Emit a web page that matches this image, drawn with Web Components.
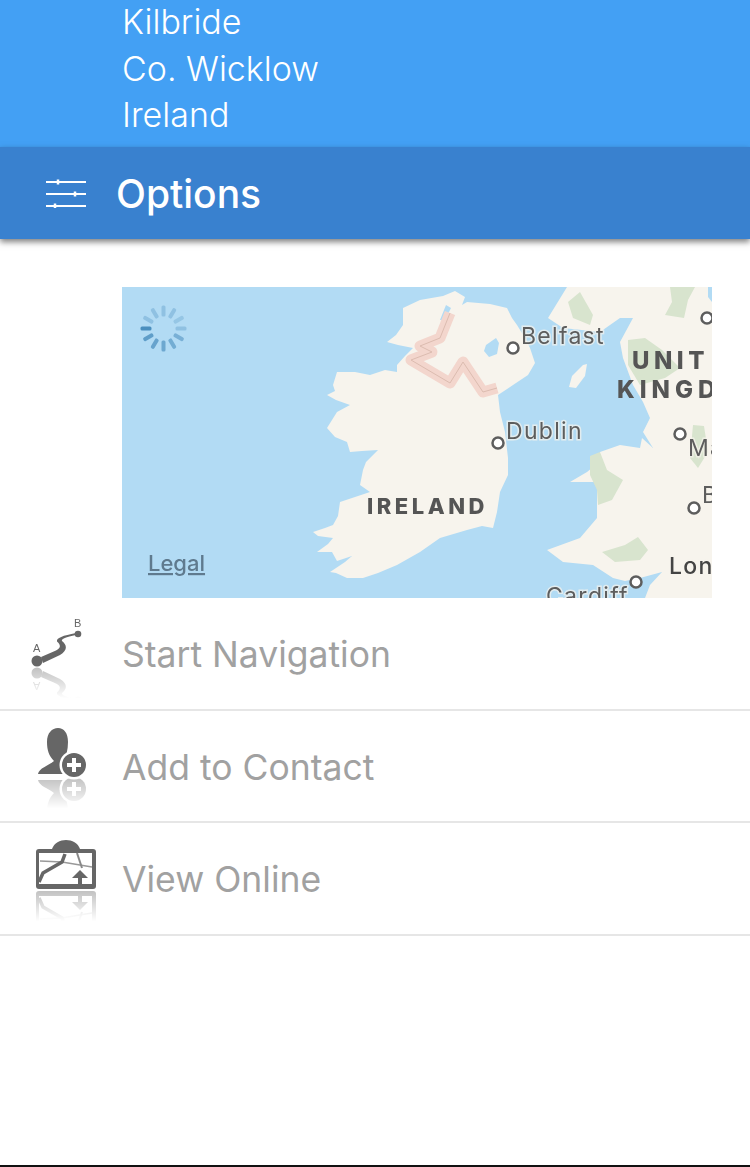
<!DOCTYPE html>
<html>
<head>
<meta charset="utf-8">
<style>
  html, body { margin: 0; padding: 0; background: #fff; }
  body { font-family: Inter, "Liberation Sans", sans-serif; height: 1167px; overflow: hidden; }
  #page { display: flex; flex-direction: column; height: 1167px; box-sizing: border-box; border-bottom: 2px solid #111; }
</style>
</head>
<body>
<div id="page">
  <address-header>
    <span>Kilbride</span>
    <span>Co. Wicklow</span>
    <span>Ireland</span>
  </address-header>
  <options-bar>Options</options-bar>
  <map-view></map-view>
  <action-list>
    <action-row icon="route">Start Navigation</action-row>
    <action-row icon="contact">Add to Contact</action-row>
    <action-row icon="online">View Online</action-row>
  </action-list>
</div>

<script>
class AddressHeader extends HTMLElement {
  constructor() {
    super();
    this.attachShadow({ mode: 'open' });
    this.shadowRoot.innerHTML = `
      <style>
        :host {
          display: flex;
          height: 147px;
          box-sizing: border-box;
          padding-left: 122px;
          background: #43a0f4;
          color: #fff;
        }
        .lines {
          display: flex;
          flex-direction: column;
          margin-top: -1px;
          font-size: 34px;
          font-weight: 300;
          line-height: 46.500px;
        }
        ::slotted(span) { display: block; }
      </style>
      <div class="lines"><slot></slot></div>
    `;
  }
}

class OptionsBar extends HTMLElement {
  constructor() {
    super();
    this.attachShadow({ mode: 'open' });
    this.shadowRoot.innerHTML = `
      <style>
        :host {
          display: flex;
          align-items: center;
          gap: 29px;
          height: 92px;
          box-sizing: border-box;
          padding-left: 45px;
          background: #3981cf;
          color: #fff;
          font-size: 39px;
          font-weight: 500;
          box-shadow: 0 3px 6px rgba(0,0,0,.5);
          position: relative;
        }
        svg { display: block; }
      </style>
      <svg width="42" height="30" viewBox="0 0 42 30" fill="none" stroke="#fff">
        <path d="M1 4h40M1 16h40M1 28h40" stroke-width="2"/>
        <path d="M13 1.500v5M30 13.500v5M10 25.500v5" stroke-width="2.500"/>
      </svg>
      <slot></slot>
    `;
  }
}

class MapView extends HTMLElement {
  constructor() {
    super();
    this.attachShadow({ mode: 'open' });
    let ticks = '';
    // spinner, darkest tick at 9 o'clock
    for (let i = 0; i < 12; i++) {
      const op = [0.9, 0.72, 0.65, 0.6, 0.55, 0.5, 0.3, 0.25, 0.3, 0.3, 0.3, 0.3][i];
      ticks += `<rect x="-23" y="-2" width="11" height="4" rx="1.500" fill="#3f86b8" opacity="${op}" transform="rotate(${-30 * i})"/>`;
    }
    this.shadowRoot.innerHTML = `
      <style>
        :host {
          display: block;
          width: 590px;
          height: 311px;
          margin: 48px 0 0 122px;
          overflow: hidden;
        }
        svg { display: block; filter: blur(.4px); }
        text { font-family: Inter, "Liberation Sans", sans-serif; }
        .city { font-size: 23px; fill: #5d5d5d; letter-spacing: 1.300px; stroke: #f7f4ed; stroke-width: 3px; paint-order: stroke; stroke-opacity: .7; }
        .country { font-size: 24px; font-weight: 800; fill: #555; letter-spacing: 4.500px; }
        .dot { fill: #fff; stroke: #5d5d5d; stroke-width: 2.500; }
      </style>
      <svg width="590" height="311" viewBox="122 287 590 311">
        <rect x="122" y="287" width="590" height="311" fill="#b2dbf4"/>
        <path fill="#f7f4ed" d="M443 296L455 291L465 297L462 305L467 302L490 304L507 308L512 318L517 325L525 338L530 348L535 363L528 375L513 385L498 395L500 412L505 432L508 458L508 475L500 492L497 512L493 528L482 526L467 530L440 538L420 552L397 565L378 573L363 578L347 578L336 573L330 572L345 562L352 556L337 561L332 552L317 552L328 544L333 538L318 536L313 532L325 528L333 525L338 516L340 502L355 497L370 492L360 485L363 470L366 462L378 450L362 451L350 452L347 442L335 437L327 428L337 412L350 405L336 400L327 395L335 391L333 385L337 372L355 372L370 375L385 370L397 372L397 365L405 356L413 348L398 345L387 342L396 335L403 325L403 308L420 300Z"/>
        <path fill="#b2dbf4" d="M486 345L496 338L499 343L497 354L489 357L484 351Z"/>
        <path fill="#b2dbf4" d="M440 320L446 305L451 308L445 320Z"/>
        <path fill="#f7f4ed" d="M567 287L712 287L712 598L645 598L650 585L662 572L640 578L625 581L613 578L593 565L563 562L547 550L580 538L597 518L597 482L570 482L587 472L599 462L600 452L577 445L600 452L620 445L640 448L642 438L653 448L643 432L650 418L643 402L633 385L623 358L620 342L633 318L620 318L600 332L563 328L548 318Z"/>
        <path fill="#b2dbf4" d="M708 287L712 287L712 302L708 297Z"/>
        <path fill="#f7f4ed" d="M583 365L587 364L585 376L576 388L569 387L572 376Z"/>
        <path fill="#d8e4ce" d="M568 302L580 292L593 315L590 325L573 318Z"/>
        <path fill="#d8e4ce" d="M670 287L695 287L688 300L684 318L665 315L672 302Z"/>
        <path fill="#d8e4ce" d="M628 340L645 338L662 350L680 368L665 378L640 385L628 365Z"/>
        <path fill="#d8e4ce" d="M590 456L600 452L607 470L623 480L612 500L598 505L597 490L590 475Z"/>
        <path fill="#d8e4ce" d="M602 552L625 545L638 537L648 550L640 560L615 562Z"/>
        <path fill="#d8e4ce" d="M693 425L704 426L708 452L698 468L690 458Z"/>
        <g fill="none" stroke-linejoin="round">
          <path stroke="#f3d6cd" stroke-width="11" d="M450 313L440 338L420 346L432 352L411 360L450 383L463 362L483 392L497 388"/>
          <path stroke="#dcbcb0" stroke-width="1" d="M450 313L440 338L420 346L432 352L411 360L450 383L463 362L483 392L497 388"/>
        </g>
        <circle class="dot" cx="513" cy="348" r="5.500"/>
        <circle class="dot" cx="498" cy="443" r="5.500"/>
        <circle class="dot" cx="707" cy="318" r="5.500"/>
        <circle class="dot" cx="680" cy="434" r="5.500"/>
        <circle class="dot" cx="694" cy="508" r="5.500"/>
        <circle class="dot" cx="636" cy="582" r="5.500"/>
        <text class="city" x="521" y="344">Belfast</text>
        <text class="city" x="506" y="439">Dublin</text>
        <text class="city" x="688" y="456">Ma</text>
        <text class="city" x="702" y="503">B</text>
        <text class="city" x="546" y="604">Cardiff</text>
        <text class="city" style="font-weight:500;fill:#444" x="669" y="574">Lon</text>
        <text class="country" x="632" y="369">UNIT</text>
        <text class="country" style="letter-spacing:5px" x="617" y="398">KINGD</text>
        <text class="country" style="font-size:22px;letter-spacing:3.500px" x="367" y="514">IRELAND</text>
        <g transform="translate(163.500 328.500)">${ticks}</g>
        <text x="148" y="571" font-size="22" font-weight="500" fill="#5f7a8e" text-decoration="underline">Legal</text>
      </svg>
    `;
  }
}

const ICONS = {
  route: `
    <path d="M11 33L26 26.500C31 24 31 21 27 17.500C26 14 33 11.500 46 9L46 11C36 13 31 15 32 17C37 21 38 26 30 31L13 39Z" fill="var(--ic)"/>
    <circle cx="7" cy="37" r="5.500" fill="var(--ic)"/>
    <circle cx="48" cy="10" r="3.300" fill="var(--ic)"/>
    <text x="3" y="28" font-size="11" fill="var(--ic)">A</text>
    <text x="44" y="3" font-size="11" fill="var(--ic)">B</text>`,
  contact: `
    <path d="M8 48C9 42 18 40 24 35C19 30 17 24 17 16C17 7 22 2 28 2C34 2 38 7 38 16C38 24 36 30 34 35L36 48Z" fill="var(--ic)"/>
    <circle cx="44" cy="39" r="14.500" fill="#fff"/>
    <circle cx="44" cy="39" r="12" fill="var(--ic)"/>
    <path d="M44 32v14M37 39h14" stroke="#fff" stroke-width="4"/>`,
  online: `
    <path d="M22 11C24 5 30 2 36 2C42 2 48 5 50 11Z" fill="var(--ic)"/>
    <rect x="6" y="11" width="60" height="40" rx="3" fill="var(--ic)"/>
    <rect x="9" y="15" width="53" height="31" fill="#fff"/>
    <path d="M10 23L32 24L62 29" fill="none" stroke="#999" stroke-width="1.500"/>
    <path d="M47 15L52 30" fill="none" stroke="#888" stroke-width="2"/>
    <path d="M9 44L13 35L32 24L35 16" fill="none" stroke="var(--ic)" stroke-width="3.500"/>
    <path d="M50 32L58 40H52V46H48V40H42Z" fill="var(--ic)"/>`
};

class ActionIcon extends HTMLElement {
  constructor() {
    super();
    this.attachShadow({ mode: 'open' });
  }

  connectedCallback() {
    const art = ICONS[this.getAttribute('name')] || '';
    const id = `fade-${this.getAttribute('name')}`;
    const axis = { route: 42.500, contact: 50.500, online: 51.500 }[this.getAttribute('name')];
    this.shadowRoot.innerHTML = `
      <style>
        :host { display: block; width: 70px; height: 90px; --ic: #666; }
        svg { display: block; overflow: visible; filter: blur(.3px); }
        text { font-family: "Liberation Sans", sans-serif; }
      </style>
      <svg width="70" height="90" viewBox="0 0 70 90">
        <defs>
          <linearGradient id="${id}-g" x1="0" y1="${axis}" x2="0" y2="${axis + 32}" gradientUnits="userSpaceOnUse">
            <stop offset="0" stop-color="#fff" stop-opacity=".42"/>
            <stop offset="1" stop-color="#fff" stop-opacity="0"/>
          </linearGradient>
          <mask id="${id}" maskUnits="userSpaceOnUse" x="-5" y="0" width="80" height="100">
            <rect x="-5" y="0" width="80" height="100" fill="url(#${id}-g)"/>
          </mask>
        </defs>
        <g mask="url(#${id})"><g transform="translate(0 ${axis * 2 + 1}) scale(1 -1)">${art}</g></g>
        ${art}
      </svg>
    `;
  }
}

class ActionList extends HTMLElement {
  constructor() {
    super();
    this.attachShadow({ mode: 'open' });
    this.shadowRoot.innerHTML = `
      <style>
        :host { display: flex; flex-direction: column; }
      </style>
      <slot></slot>
    `;
  }
}

class ActionRow extends HTMLElement {
  constructor() {
    super();
    this.attachShadow({ mode: 'open' });
    const name = this.getAttribute('icon');
    const top = { route: 26, contact: 15, online: 15 }[name];
    this.shadowRoot.innerHTML = `
      <style>
        :host {
          display: flex;
          align-items: center;
          height: 112.500px;
          box-sizing: border-box;
          padding-left: 30px;
          border-bottom: 2px solid #e6e6e6;
          color: #a1a1a1;
          font-size: 35.500px;
          font-weight: 400;
        }
        action-icon { align-self: flex-start; margin-top: ${top}px; flex: none; margin-right: 22px; }
        .label { padding-top: 3px; }
      </style>
      <action-icon name="${name}"></action-icon>
      <div class="label"><slot></slot></div>
    `;
  }
}

customElements.define('address-header', AddressHeader);
customElements.define('options-bar', OptionsBar);
customElements.define('map-view', MapView);
customElements.define('action-icon', ActionIcon);
customElements.define('action-list', ActionList);
customElements.define('action-row', ActionRow);
</script>
</body>
</html>
